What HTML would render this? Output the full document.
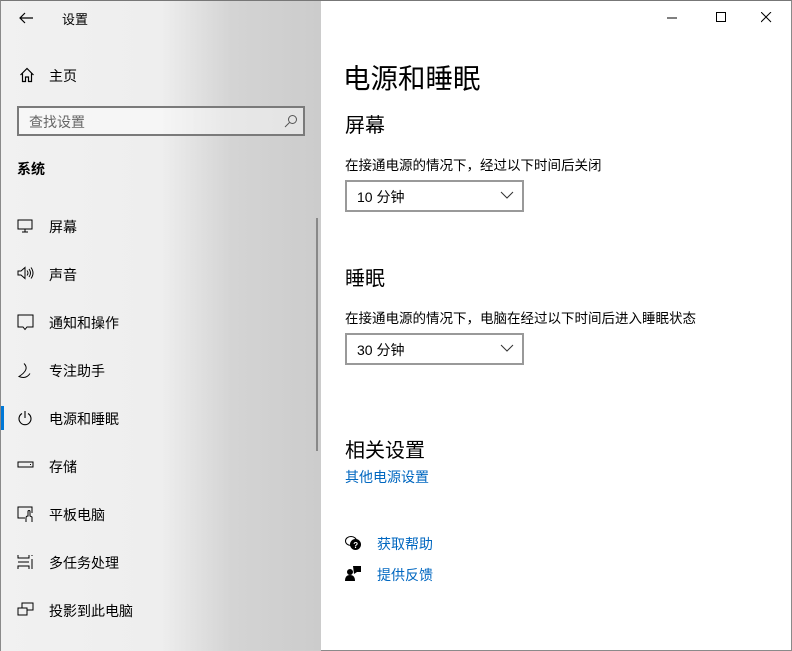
<!DOCTYPE html>
<html><head><meta charset="utf-8"><style>
*{margin:0;padding:0;box-sizing:border-box}
body{width:792px;height:651px;overflow:hidden;font-family:"Liberation Sans","Noto Sans CJK SC",sans-serif;color:#000;background:#fff;position:relative}
.side{position:absolute;left:0;top:0;width:321px;height:651px;background:linear-gradient(90deg,#f1f1f1 0%,#eeeeee 50%,#d4d4d4 72%,#cccccc 100%);border-left:1px solid #8a8a8a;border-top:1px solid #777}
.main{position:absolute;left:321px;top:0;right:0;height:651px;background:#fff;border-top:1px solid #777;border-right:1px solid #8a8a8a;border-bottom:1px solid #8a8a8a}
.t{position:absolute;font-size:14px;white-space:nowrap}
.side .t{margin-left:-1px}
.ic{position:absolute}
.link{color:#0067c0}
.dd{position:absolute;left:345px;width:179px;height:32px;border:2px solid #999;background:#fff;font-size:14px;padding:5px 10px}
.dd svg{position:absolute;right:8px;top:9px}
</style></head><body>
<div class="side">
 <svg class="ic" style="left:17px;top:10px" width="16" height="14"><path d="M15 7H2M7 2L2 7l5 5" stroke="#000" fill="none" stroke-width="1.2"/></svg>
 <div class="t" style="left:62px;top:8px;font-size:13px">设置</div>
 <svg class="ic" style="left:18px;top:66px" width="16" height="16"><path d="M1.5 8L8 1.5 14.5 8M3.5 6.5V14.5H6.5V10h3v4.5h3V6.5" stroke="#000" fill="none" stroke-width="1.2"/></svg>
 <div class="t" style="left:49px;top:65px">主页</div>
 <div style="position:absolute;left:16px;top:105px;width:288px;height:30px;border:2px solid #7a7a7a;background:rgba(255,255,255,.45)"></div>
 <div class="t" style="left:29px;top:111px;color:#666">查找设置</div>
 <svg class="ic" style="left:283px;top:113px" width="14" height="14"><circle cx="8.5" cy="5.5" r="4" stroke="#555" fill="none"/><path d="M5.5 8.5L1 13" stroke="#555"/></svg>
 <div class="t" style="left:17px;top:158px;font-weight:bold">系统</div>
 <div style="position:absolute;left:315px;top:217px;width:2px;height:233px;background:#888"></div>
 <div style="position:absolute;left:0;top:405px;width:3px;height:24px;background:#0078d7"></div>
 <svg class="ic" style="left:16px;top:218px" width="17" height="14"><rect x="1" y="1" width="14" height="9" stroke="#000" fill="none"/><path d="M8 10v3M5 13h6" stroke="#000"/></svg>
 <div class="t" style="left:49px;top:216px">屏幕</div>
 <svg class="ic" style="left:16px;top:265px" width="17" height="14"><path d="M1 5h3l4-3.5v11L4 9H1z" stroke="#000" fill="none"/><path d="M10 4.5q2 2.5 0 5M12 3q3 4 0 8M14 1.5q4 5.5 0 11" stroke="#000" fill="none"/></svg>
 <div class="t" style="left:49px;top:264px">声音</div>
 <svg class="ic" style="left:16px;top:313px" width="17" height="17"><path d="M1 1h15v12h-6l-2 2.5L6 13H1z" stroke="#000" fill="none"/></svg>
 <div class="t" style="left:49px;top:312px">通知和操作</div>
 <svg class="ic" style="left:16px;top:361px" width="16" height="17"><path d="M7 1.5q6 6 -5 13q7 3 11-3" stroke="#000" fill="none"/></svg>
 <div class="t" style="left:49px;top:360px">专注助手</div>
 <svg class="ic" style="left:16px;top:409px" width="16" height="16"><path d="M5 3.5a6 6 0 1 0 6 0M8 1v7" stroke="#000" fill="none" stroke-width="1.1"/></svg>
 <div class="t" style="left:49px;top:408px">电源和睡眠</div>
 <svg class="ic" style="left:16px;top:460px" width="17" height="10"><rect x="1" y="1" width="15" height="5" stroke="#000" fill="none"/><path d="M13 3.5h1" stroke="#000"/></svg>
 <div class="t" style="left:49px;top:456px">存储</div>
 <svg class="ic" style="left:16px;top:505px" width="17" height="17"><path d="M8 12H1V1h14v6" stroke="#000" fill="none"/><path d="M9 16v-4q0-2 2-2h0V5.5a1 1 0 0 1 2 0V10l2 1v5" stroke="#000" fill="none"/></svg>
 <div class="t" style="left:49px;top:504px">平板电脑</div>
 <svg class="ic" style="left:16px;top:553px" width="17" height="16"><path d="M1 1v3h11V1M1 15v-3h11v3M1 8h11M15 1v1M15 5v10" stroke="#000" fill="none"/></svg>
 <div class="t" style="left:49px;top:552px">多任务处理</div>
 <svg class="ic" style="left:16px;top:601px" width="17" height="15"><rect x="5" y="1" width="11" height="7" stroke="#000" fill="none"/><rect x="1" y="6" width="9" height="7" stroke="#000" fill="#f0f0f0"/></svg>
 <div class="t" style="left:49px;top:600px">投影到此电脑</div>
</div>
<div class="main">
 <svg class="ic" style="left:346px;top:12px" width="12" height="10"><path d="M0 5h10" stroke="#000"/></svg>
 <svg class="ic" style="left:395px;top:11px" width="11" height="11"><rect x="0.5" y="0.5" width="9" height="9" stroke="#000" fill="none"/></svg>
 <svg class="ic" style="left:440px;top:11px" width="11" height="11"><path d="M0 0l10 10M10 0L0 10" stroke="#000"/></svg>
</div>
<div class="t" style="left:343px;top:56px;font-size:27.5px">电源和睡眠</div>
<div class="t" style="left:345px;top:109px;font-size:20px">屏幕</div>
<div class="t" style="left:345px;top:154px;font-size:13.5px">在接通电源的情况下，经过以下时间后关闭</div>
<div class="dd" style="top:180px">10 分钟<svg width="14" height="8"><path d="M1 1l6 6 6-6" stroke="#333" fill="none"/></svg></div>
<div class="t" style="left:345px;top:262px;font-size:20px">睡眠</div>
<div class="t" style="left:345px;top:307px;font-size:13.5px">在接通电源的情况下，电脑在经过以下时间后进入睡眠状态</div>
<div class="dd" style="top:333px">30 分钟<svg width="14" height="8"><path d="M1 1l6 6 6-6" stroke="#333" fill="none"/></svg></div>
<div class="t" style="left:345px;top:434px;font-size:20px">相关设置</div>
<div class="t link" style="left:345px;top:467px">其他电源设置</div>
<svg class="ic" style="left:345px;top:535px" width="17" height="16"><ellipse cx="6" cy="6" rx="5.5" ry="4.5" stroke="#000" fill="none"/><circle cx="10.5" cy="9.5" r="5.5" fill="#000"/><text x="8.3" y="13" font-size="8" fill="#fff" font-family="Liberation Sans" font-weight="bold">?</text></svg>
<div class="t link" style="left:377px;top:534px">获取帮助</div>
<svg class="ic" style="left:345px;top:565px" width="16" height="16"><circle cx="5" cy="7" r="3" fill="#000"/><path d="M0 16q0-6 5-6t5 6z" fill="#000"/><path d="M8 1h8v6h-4l-3 2z" fill="#000"/></svg>
<div class="t link" style="left:377px;top:565px">提供反馈</div>
</body></html>
